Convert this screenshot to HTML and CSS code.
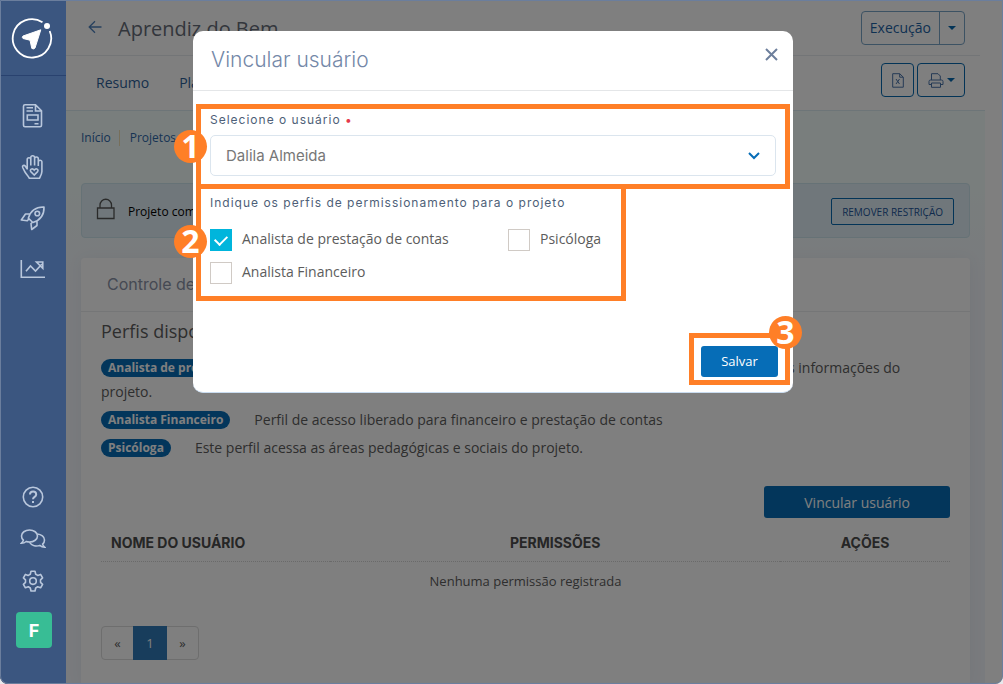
FILE: index.html
```html
<!DOCTYPE html>
<html lang="pt-BR">
<head>
<meta charset="utf-8">
<meta name="viewport" content="width=device-width, initial-scale=1">
<title>Aprendiz do Bem</title>
<link rel="stylesheet" href="styles.css">
</head>
<body>
<div class="app">
  <nav class="sidebar" aria-label="Principal">
    <a class="logo" href="#" aria-label="Início">
      <svg width="42" height="42" viewBox="0 0 42 42" fill="none">
        <path d="M31.500 5.300A19.200 19.200 0 1 0 38.700 14" stroke="#fff" stroke-width="1.800"/>
        <circle cx="36" cy="9" r="3" fill="#fff"/>
        <path d="M29.800 12.800 L12 19 Q10.600 20.400 12 21.500 L19 23.200 L20.800 31.400 Q22.500 32.600 24 31 Z" fill="#fff" stroke="#fff" stroke-width="1" stroke-linejoin="round"/>
      </svg>
    </a>
    <div class="side-links">
      <a href="#" aria-label="Editais">
        <svg class="icon" viewBox="0 0 26 26"><path d="M5 1.800h10.500l6 6v14.500a1.500 1.500 0 0 1-1.500 1.500h-15a1.500 1.500 0 0 1-1.500-1.500V3.300a1.500 1.500 0 0 1 1.500-1.500zM15.500 2v6h6M6.500 4.800h6.500M6.500 8h6.500M7.300 12h10.700v5h-10.700zM14.500 20.800h4"/></svg>
      </a>
      <a href="#" aria-label="Doações">
        <svg class="icon" viewBox="0 0 26 26"><path d="M7.200 15.500V5.500a1.700 1.700 0 0 1 3.600 0V11.500V3.600a1.900 1.900 0 0 1 3.800 0V11.500V4.800a1.800 1.800 0 0 1 3.700 0V12V8a1.800 1.800 0 0 1 3.600 0v9.500c0 2.500-1.200 4.500-2.400 6.700H9.300C8 21.500 6.500 20.500 5 18L2.700 13.500c-.8-1.800 1.400-2.900 2.500-1.500l2 3"/><path d="M14.200 21l-3.400-3.400c-1.500-1.900 1.400-4.200 3.400-1.500 2-2.700 4.900-.4 3.400 1.500z"/></svg>
      </a>
      <a href="#" aria-label="Projetos">
        <svg class="icon" viewBox="0 0 26 26"><path d="M8.300 13.200C10.500 6 15.500 1.700 24 2c.3 8.500-4 13.300-11.200 15.500zM10 9H5.500L1.300 15l6 .7 1.700-2M17 16v4.500l-5.300 4-.7-6 1.800-1.500" stroke-linejoin="round"/><circle cx="17.300" cy="8.500" r="2.300"/></svg>
      </a>
      <a href="#" aria-label="Indicadores">
        <svg class="icon" viewBox="0 0 26 26"><path d="M1.300 4v17.300H25M6 15.300l4.500-5.300 5 5L22 8M16.500 6h6.300v6.300z"/></svg>
      </a>
    </div>
    <div class="side-tools">
      <a href="#" aria-label="Ajuda">
        <svg class="icon" viewBox="0 0 26 26"><circle cx="13" cy="13" r="9.700"/><path d="M10 10.500c0-4 6.200-4 6.200 0 0 2.400-3.200 2.300-3.200 4.700M13 17v2" stroke-width="2"/></svg>
      </a>
      <a href="#" aria-label="Mensagens">
        <svg class="icon" viewBox="0 0 26 26"><path d="M9.500 4c4.500 0 8 2.700 8 6s-3.500 6-8 6c-1.200 0-2.300-.2-3.300-.5C5 16.500 3.300 17.200 1.500 17.200c1-.9 1.700-2 1.900-3C2.200 13.100 1.500 11.600 1.500 10c0-3.300 3.500-6 8-6z"/><path d="M17.300 8c4 .3 7.200 2.800 7.200 5.900 0 1.600-.7 3.100-1.900 4.200.2 1 .9 2.100 1.900 3-1.800 0-3.500-.7-4.700-1.700-4.300 1.200-8.600-.2-10.400-3.200"/></svg>
      </a>
      <a href="#" aria-label="Configurações">
        <svg class="icon" viewBox="0 0 26 26"><path d="M11 3.200h4l.7 3 2 1.200 2.900-1 2 3.500-2.100 2v2.400l2.100 2-2 3.500-2.900-1-2 1.200-.7 3h-4l-.7-3-2-1.200-2.900 1-2-3.500 2.100-2v-2.400l-2.100-2 2-3.500 2.900 1 2-1.200z" stroke-linejoin="round"/><circle cx="13" cy="13.100" r="3.300"/></svg>
      </a>
      <a class="avatar" href="#">F</a>
    </div>
  </nav>

  <main class="page">
    <header class="topbar">
      <a class="back" href="#" aria-label="Voltar">
        <svg width="14" height="14" viewBox="0 0 14 14"><path d="M13.500 7H1.500M7 1.200L1.200 7 7 12.800"/></svg>
      </a>
      <h1>Aprendiz do Bem</h1>
      <div class="split">
        <button type="button">Execução</button>
        <button type="button" class="caret-btn" aria-label="Mais opções"><span class="caret"></span></button>
      </div>
    </header>
    <div class="tabs">
      <a href="#">Resumo</a>
      <a href="#">Planejamento</a>
      <div class="tab-tools">
        <button type="button" aria-label="Exportar planilha">
          <svg width="12" height="15" viewBox="0 0 12 15"><path d="M.7.700h7l3.600 3.500v10H.7zM7.700.700v3.500h3.600M4 6l3.500 5M7.500 6L4 11"/></svg>
        </button>
        <button type="button" class="print" aria-label="Imprimir">
          <svg width="16" height="15" viewBox="0 0 16 15"><path d="M3.500 7V.700h6.500l2.300 2.300v4M3.500 11.500H1V8.500Q1 7 2.500 7h11Q15 7 15 8.500v3h-2.500M3.500 10h9v4.300h-9z"/></svg>
          <span class="caret"></span>
        </button>
      </div>
    </div>
    <div class="content">
      <div class="crumbs">
        <a href="#">Início</a>
        <a href="#">Projetos</a>
      </div>
      <div class="notice">
        <svg width="20" height="22" viewBox="0 0 20 22"><path d="M1.500 10h16.500v10.500h-16.500zM4 10V7a5.700 5.700 0 0 1 11.500 0v3"/></svg>
        <span>Projeto com restrição</span>
        <button type="button">REMOVER RESTRIÇÃO</button>
      </div>
      <section class="card">
        <h2>Controle de acesso</h2>
        <div class="card-body">
          <h3>Perfis disponíveis</h3>
          <p><span class="tag">Analista de prestação de contas</span>Perfil de acesso à prestação de contas, com permissão para explorar as informações do projeto.</p>
          <p><span class="tag">Analista Financeiro</span>Perfil de acesso liberado para financeiro e prestação de contas</p>
          <p><span class="tag">Psicóloga</span>Este perfil acessa as áreas pedagógicas e sociais do projeto.</p>
          <button type="button" class="primary link-user">Vincular usuário</button>
          <table>
            <thead>
              <tr><th class="col-name">NOME DO USUÁRIO</th><th class="col-perm">PERMISSÕES</th><th>AÇÕES</th></tr>
            </thead>
            <tbody>
              <tr><td colspan="3">Nenhuma permissão registrada</td></tr>
            </tbody>
          </table>
          <div class="pager">
            <a href="#">«</a><a class="current" href="#">1</a><a href="#">»</a>
          </div>
        </div>
      </section>
    </div>
  </main>

  <div class="overlay">
    <form class="dialog" role="dialog" aria-labelledby="dialog-title">
      <div class="dialog-head">
        <h2 id="dialog-title">Vincular usuário</h2>
        <button type="button" class="close" aria-label="Fechar">
          <svg width="13" height="13" viewBox="0 0 13 13"><path d="M1 1l11 11M12 1L1 12"/></svg>
        </button>
      </div>
      <div class="dialog-body">
        <div class="step">
          <span class="num num-left">1</span>
          <label class="caption" for="user">Selecione o usuário <span class="req">•</span></label>
          <div class="select">
            <select id="user"><option>Dalila Almeida</option></select>
            <svg width="12" height="8" viewBox="0 0 12 8"><path d="M1 1l5 5 5-5"/></svg>
          </div>
        </div>
        <fieldset class="step step-roles" aria-labelledby="roles">
          <span class="num num-left num-mid">2</span>
          <div class="caption" id="roles">Indique os perfis de permissionamento para o projeto</div>
          <div class="roles">
            <label><input type="checkbox" checked>Analista de prestação de contas</label>
            <label><input type="checkbox">Psicóloga</label>
            <label><input type="checkbox">Analista Financeiro</label>
          </div>
        </fieldset>
        <div class="step step-save">
          <span class="num num-corner">3</span>
          <button type="submit" class="primary">Salvar</button>
        </div>
      </div>
    </form>
  </div>
</div>
</body>
</html>
```
FILE: styles.css
```css
* { box-sizing: border-box; }

body {
  margin: 0;
  background: #e8e8ec;
  font-family: "Open Sans", "Noto Sans", sans-serif;
  font-size: 14px;
  color: #5c5c5c;
}
h1, h2, h3, p { margin: 0; font-weight: 400; }
a { color: inherit; text-decoration: none; }
button, select { font: inherit; color: inherit; cursor: pointer; }
button { display: flex; align-items: center; justify-content: center; padding: 0; background: none; }
svg { fill: none; }

.app {
  position: relative;
  display: flex;
  min-height: 100vh;
  overflow: hidden;
  border-radius: 0 0 8px 8px;
  background: #fff;
}
.app::after {
  content: "";
  position: absolute;
  inset: 0;
  z-index: 4;
  border: 1px solid #6b7e9d;
  border-radius: 0 0 8px 8px;
  pointer-events: none;
}

/* Sidebar */
.sidebar {
  position: relative;
  z-index: 3;
  display: flex;
  flex-direction: column;
  flex: none;
  width: 66px;
  padding-bottom: 36px;
  background: #3b5680;
}
.logo {
  display: flex;
  justify-content: center;
  align-items: center;
  height: 76px;
  padding-right: 2px;
  border-bottom: 1px solid #29426f;
}
.side-links, .side-tools {
  display: flex;
  flex-direction: column;
  align-items: center;
}
.side-links { gap: 25px; padding-top: 27px; }
.side-tools { gap: 16px; margin-top: auto; }
.side-links a, .side-tools a { display: flex; }
.icon { width: 26px; height: 26px; stroke: #b9c7dc; stroke-width: 1.600; }
.side-tools .avatar {
  align-items: center;
  justify-content: center;
  width: 36px;
  height: 36px;
  margin: 2px 0 0 2px;
  border-radius: 4px;
  background: #38bd95;
  color: #fff;
  font: 700 18px Inter, sans-serif;
}

/* Page */
.page {
  display: flex;
  flex-direction: column;
  flex: 1;
  min-width: 0;
  padding-right: 18px;
}
.topbar {
  display: flex;
  align-items: center;
  height: 56px;
  margin-right: 5px;
  padding: 0 15px 0 22px;
  border-bottom: 1px solid #e6eaee;
}
.back { display: flex; margin: 0 16px 2px 0; }
.back svg { stroke: #4f82bd; stroke-width: 1.300; }
h1 { padding-top: 2px; font-size: 20px; color: #666c78; }
.split {
  display: flex;
  height: 34px;
  margin-left: auto;
  border: 1px solid #78a4c6;
  border-radius: 4px;
  color: #1c62a4;
}
.split button { padding: 0 8px; border: 0; }
.split .caret-btn { width: 25px; border-left: 1px solid #78a4c6; }
.caret {
  border: 4px solid transparent;
  border-top-color: #0668ae;
  border-bottom: 0;
}
.tabs {
  display: flex;
  align-items: center;
  gap: 30px;
  height: 55px;
  padding: 0 20px 2px 30px;
  border-bottom: 1px solid #dbeaf0;
  color: #2d5f98;
}
.tab-tools { display: flex; gap: 3px; margin: 0 0 4px auto; }
.tab-tools button {
  width: 33px;
  height: 34px;
  border: 1px solid #0668ae;
  border-radius: 4px;
}
.tab-tools .print { width: 48px; gap: 3px; }
.tab-tools svg { stroke: #4a74ab; stroke-width: 1; }

.content {
  display: flex;
  flex-direction: column;
  flex: 1;
  padding: 15px 15px 0;
  background: linear-gradient(#f3fcfb 80px, #f3f6fc 180px);
}
.crumbs {
  display: flex;
  align-items: center;
  height: 24px;
  margin-bottom: 33px;
  font-size: 12px;
  line-height: 16px;
  color: #2d68a8;
}
.crumbs a + a { margin-left: 8px; padding-left: 10px; border-left: 1px solid #eedfb5; }
.notice {
  display: flex;
  align-items: center;
  height: 55px;
  margin-bottom: 20px;
  padding: 0 15px 0 14px;
  border: 1px solid #cce5ec;
  border-radius: 4px;
  background: #e0eff6;
  font-size: 12px;
  color: #000;
}
.notice span { padding-top: 2px; }
.notice svg { margin: 0 12px 4px 0; stroke: #555; stroke-width: 1.300; }
.notice button {
  height: 27px;
  margin: 2px 0 0 auto;
  padding: 0 10px;
  border: 1px solid #0668ae;
  border-radius: 2px;
  font-size: 10px;
  color: #20559b;
}

.card {
  flex: 1;
  border-radius: 4px 4px 0 0;
  background: #fff;
  box-shadow: 0 0 15px rgba(60, 80, 110, .06);
}
.card h2 {
  height: 54px;
  padding: 0 26px;
  border-bottom: 1px solid #eaecef;
  font: 400 16px/52px Inter, sans-serif;
  color: #8b93a7;
}
.card-body { padding: 6px 20px 16px; }
h3 { margin-bottom: 11px; font-size: 18px; line-height: 27px; }
.card p { margin-bottom: 4px; line-height: 24px; }
.tag {
  display: inline-block;
  margin-right: 24px;
  padding: 0 7px 1px;
  border-radius: 9px;
  background: #066db7;
  color: #fff;
  font-weight: 700;
  font-size: 12px;
  line-height: 17px;
  vertical-align: 1px;
}
.primary {
  border: 0;
  border-radius: 3px;
  background: #066db7;
  color: #fff;
}
.link-user { height: 32px; margin: 26px 0 7px auto; padding: 0 40px; }
table { width: 100%; border-collapse: collapse; table-layout: fixed; }
th {
  height: 36px;
  padding: 0;
  border-bottom: 1px dotted #d5d5d5;
  font: 700 14px Inter, sans-serif;
  color: #4c4c4c;
}
.col-name { width: 27%; padding-left: 10px; text-align: left; }
.col-perm { width: 53%; }
td { height: 40px; padding: 0; font-size: 13px; text-align: center; }
.pager {
  display: flex;
  width: fit-content;
  margin-top: 25px;
  border: 1px solid #dcdcdc;
  border-radius: 4px;
}
.pager a { width: 31px; font-size: 13px; line-height: 32px; text-align: center; }
.pager .current { width: 34px; margin: -1px 0; background: #317ab8; line-height: 34px; color: #fff; }

/* Dialog */
.overlay {
  position: absolute;
  inset: 0;
  z-index: 2;
  display: flex;
  align-items: flex-start;
  justify-content: center;
  padding: 31px 17px 0 0;
  background: rgba(0, 0, 0, .5);
}
.dialog {
  width: 600px;
  border-bottom: 1px solid #c9dcf0;
  border-radius: 10px;
  background: #fff;
}
.dialog-head {
  display: flex;
  justify-content: space-between;
  height: 60px;
  padding: 16px 14px 0 18px;
  border-bottom: 1px solid #e4e6e8;
}
.dialog-head h2 { font: 300 21px/26px Inter, sans-serif; color: #7488a8; }
.close { width: 15px; height: 15px; border: 0; }
.close svg { stroke: #6d7f9c; stroke-width: 2; }
.dialog-body { padding: 13px 3px 7px; }
.step {
  position: relative;
  margin: 0;
  padding: 0 9px 8px;
  border: 5px solid #ff7f27;
}
.step-roles { width: 430px; height: 117px; margin-top: -5px; }
.caption {
  display: block;
  height: 26px;
  font: 400 12px/22px Inter, sans-serif;
  letter-spacing: 1px;
  color: #4e5f78;
}
.step-roles .caption { height: 40px; line-height: 28px; }
.req { color: #e5394b; }
.select { position: relative; }
.select select {
  display: block;
  appearance: none;
  width: 100%;
  height: 41px;
  padding: 0 15px;
  border: 1px solid #dbe5ee;
  border-radius: 5px;
  background: #fff;
  font: 400 15px Inter, sans-serif;
  color: #777;
}
.select svg {
  position: absolute;
  top: 17px;
  right: 16px;
  stroke: #066db7;
  stroke-width: 2;
  pointer-events: none;
}
.roles {
  display: grid;
  grid-template-columns: 298px auto;
  gap: 11px 0;
}
.roles label { display: flex; align-items: flex-start; gap: 10px; height: 22px; line-height: 20px; white-space: nowrap; }
.roles input {
  display: grid;
  place-items: center;
  appearance: none;
  width: 22px;
  height: 22px;
  margin: 0;
  border: 1px solid #d0cac5;
  background: #fff;
}
.roles input:checked { border-color: #00b5dc; background: #00b5dc; }
.roles input:checked::after {
  content: "";
  width: 10px;
  height: 6px;
  margin-bottom: 3px;
  border: solid #fff;
  border-width: 0 0 2px 2px;
  transform: rotate(-45deg);
}
.step-save { width: 101px; margin: 32px 0 0 auto; padding: 8px 7px 3px; }
.step-save button { width: 77px; height: 31px; padding-bottom: 2px; font-size: 13px; }
.num {
  position: absolute;
  width: 33px;
  height: 33px;
  border-radius: 50%;
  background: #ff7f27;
  color: #fff;
  font-weight: 700;
  font-size: 32px;
  line-height: 32px;
  text-align: center;
}
.num-left { top: 21px; left: -27px; }
.num-mid { top: 36px; }
.num-corner { top: -22px; right: -17px; }
```
